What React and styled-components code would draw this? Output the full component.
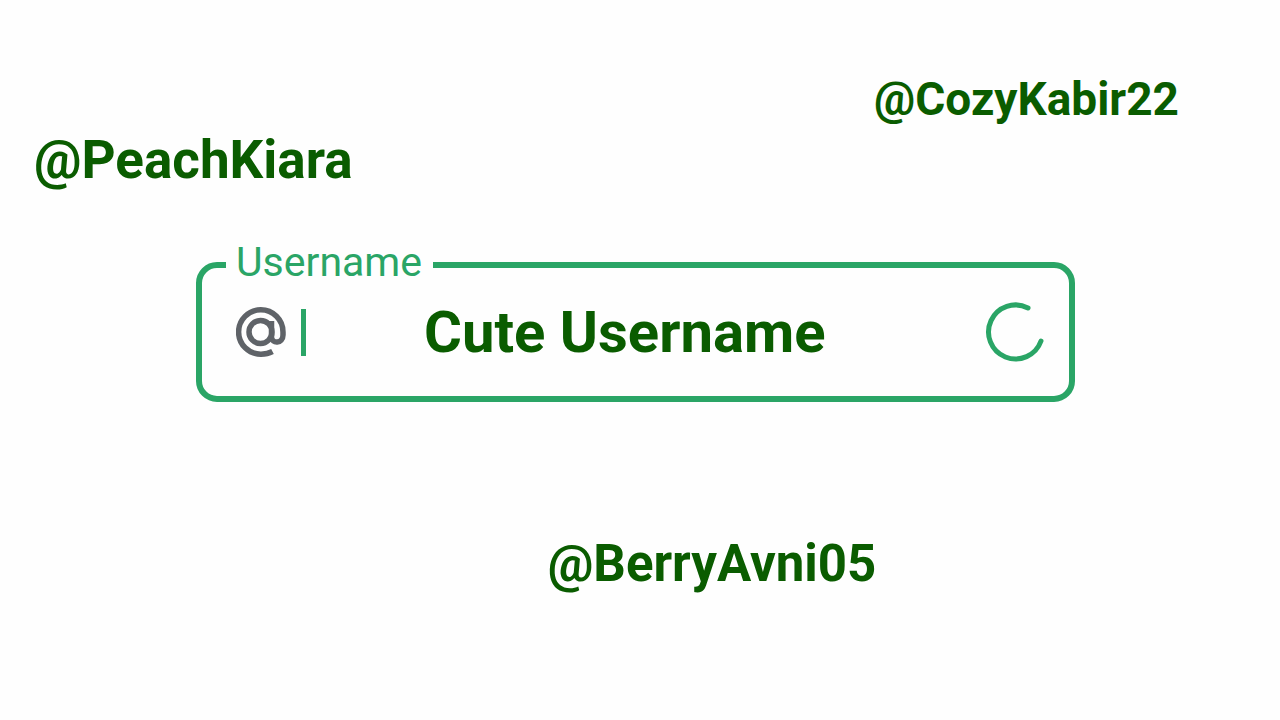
import React, { useState } from 'react'
import styled, { createGlobalStyle } from 'styled-components'

export default function App() {
  const [name, setName] = useState('Cute Username')

  return (
    <>
      <GlobalStyle />
      <Page>
        <TopRow>
          <Handle $size={53}>@PeachKiara</Handle>
          <Handle $size={46} $raised>@CozyKabir22</Handle>
        </TopRow>
        <Field>
          <Legend>
            <label htmlFor="username">Username</label>
          </Legend>
          <FieldRow>
            <AtIcon />
            <Caret />
            <NameInput
              id="username"
              type="text"
              spellCheck="false"
              autoComplete="off"
              value={name}
              onChange={e => setName(e.target.value)}
            />
            <Spinner />
          </FieldRow>
        </Field>
        <BottomRow>
          <Handle $size={51}>@BerryAvni05</Handle>
        </BottomRow>
      </Page>
    </>
  )
}

function AtIcon() {
  return (
    <svg width="50" height="50" viewBox="0 0 50 50" fill="none" stroke="#5f6368" strokeWidth="5.5" aria-hidden="true">
      <circle cx="24.5" cy="25" r="11.5" />
      <path d="M35.5 14V30C35.5 37 47 37 47 28V25A22.2 22.2 0 1 0 25 47.2Q31.5 47.2 36.5 44.5" />
    </svg>
  )
}

function Spinner() {
  return (
    <svg width="60" height="60" viewBox="0 0 60 60" fill="none" stroke="#2aa566" strokeWidth="5" strokeLinecap="round" aria-hidden="true">
      <path d="M44 6A27 27 0 1 0 57 39" />
    </svg>
  )
}

const GlobalStyle = createGlobalStyle`
  * { box-sizing: border-box; }
  body {
    margin: 0;
    background: #fefefe;
    font-family: Roboto, "Liberation Sans", sans-serif;
  }
`

const Page = styled.main`
  min-height: 100vh;
  padding-top: 67px;
`

const TopRow = styled.div`
  display: flex;
  justify-content: space-between;
  align-items: flex-end;
  height: 125px;
  padding: 0 101px 0 34px;
`

const Handle = styled.span`
  align-self: ${props => (props.$raised ? 'flex-start' : 'auto')};
  color: #0a5c00;
  font-size: ${props => props.$size}px;
  font-weight: 700;
  line-height: 64px;
`

const Field = styled.fieldset`
  min-width: 0;
  margin: 50px 205px 0 196px;
  padding: 14px 25px 34px 34px;
  border: 6px solid #2aa566;
  border-radius: 21px;
`

const Legend = styled.legend`
  margin-left: -10px;
  padding: 0 11px 6px 10px;
  color: #2aa566;
  font-size: 41px;
  line-height: 40px;
`

const FieldRow = styled.div`
  display: flex;
  align-items: center;
`

const Caret = styled.span`
  width: 5px;
  height: 47px;
  margin-left: 15px;
  background: #2aa566;
`

const NameInput = styled.input`
  flex: 1;
  min-width: 0;
  height: 60px;
  margin-left: 118px;
  padding: 0;
  border: 0;
  outline: 0;
  background: transparent;
  color: #0a5c00;
  font-family: inherit;
  font-size: 58px;
  font-weight: 700;
`

const BottomRow = styled.div`
  display: flex;
  justify-content: center;
  padding: 130px 0 60px 144px;
`
